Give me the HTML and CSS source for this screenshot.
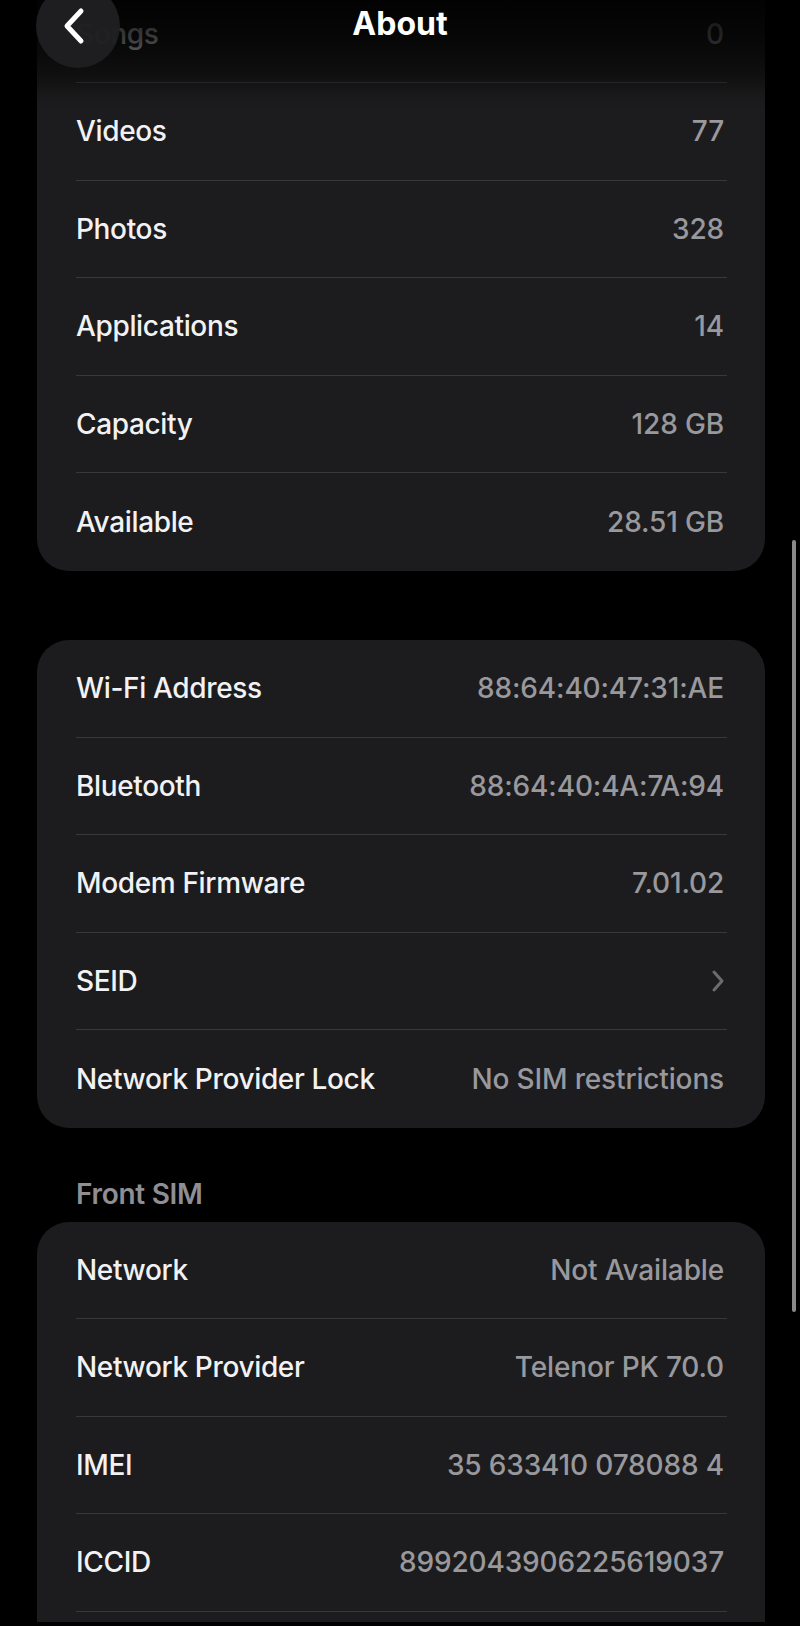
FILE: index.html
```html
<!DOCTYPE html>
<html>

<head>
    <title>About</title>
    <link rel="stylesheet" href="styles.css">
</head>

<body>
    <div class="screen">
        <div class="nav-fade"></div>
        <button class="back-btn" type="button">
            <svg width="26" height="38" viewBox="0 0 26 38">
                <polyline points="19,4 5,19 19,34" fill="none" stroke="#ffffff" stroke-width="5"
                    stroke-linecap="round" stroke-linejoin="round" />
            </svg>
        </button>
        <h1 class="nav-title">About</h1>

        <div class="content">
            <section class="group group-first">
                <div class="row"><span class="label">Songs</span><span class="value">0</span></div>
                <div class="row"><span class="label">Videos</span><span class="value">77</span></div>
                <div class="row"><span class="label">Photos</span><span class="value">328</span></div>
                <div class="row"><span class="label">Applications</span><span class="value">14</span></div>
                <div class="row"><span class="label">Capacity</span><span class="value">128 GB</span></div>
                <div class="row"><span class="label">Available</span><span class="value">28.51 GB</span></div>
            </section>

            <section class="group">
                <div class="row"><span class="label">Wi-Fi Address</span><span class="value">88:64:40:47:31:AE</span></div>
                <div class="row"><span class="label">Bluetooth</span><span class="value">88:64:40:4A:7A:94</span></div>
                <div class="row"><span class="label">Modem Firmware</span><span class="value">7.01.02</span></div>
                <div class="row">
                    <span class="label">SEID</span>
                    <svg class="disclosure" width="14" height="24" viewBox="0 0 14 24">
                        <polyline points="3,3 11,12 3,21" fill="none" stroke="#6c6c70" stroke-width="3"
                            stroke-linecap="round" stroke-linejoin="round" />
                    </svg>
                </div>
                <div class="row"><span class="label">Network Provider Lock</span><span class="value">No SIM restrictions</span></div>
            </section>

            <h2 class="group-title">Front SIM</h2>
            <section class="group">
                <div class="row"><span class="label">Network</span><span class="value">Not Available</span></div>
                <div class="row"><span class="label">Network Provider</span><span class="value">Telenor PK 70.0</span></div>
                <div class="row"><span class="label">IMEI</span><span class="value">35 633410 078088 4</span></div>
                <div class="row"><span class="label">ICCID</span><span class="value">8992043906225619037</span></div>
                <div class="row"></div>
            </section>
        </div>

        <div class="scroll-indicator"></div>
    </div>
</body>

</html>
```

FILE: styles.css
```css
html,
body {
    margin: 0;
    padding: 0;
    background-color: #000;
}

body {
    font-family: 'Inter', 'Liberation Sans', sans-serif;
    height: 1626px;
    overflow: hidden;
}

.screen {
    position: relative;
    width: 800px;
    height: 1622px;
    overflow: hidden;
    background-color: #000;
}

.content {
    padding: 0 35px 0 37px;
}

.group {
    background-color: #1c1c1e;
    border-radius: 32px;
    margin-top: 69.5px;
}

.group-first {
    margin-top: -60px;
    padding-top: 45.5px;
}

.row {
    box-sizing: border-box;
    height: 97.5px;
    margin: 0 38px 0 39px;
    padding-right: 3px;
    display: flex;
    align-items: center;
    justify-content: space-between;
    border-bottom: 1px solid #38383b;
}

.row:last-child {
    border-bottom: none;
}

.label {
    font-size: 28px;
    font-weight: 500;
    letter-spacing: -0.35px;
    color: #f2f2f4;
}

.value {
    font-size: 28px;
    font-weight: 500;
    letter-spacing: -0.15px;
    color: #98989d;
}

.disclosure {
    margin-right: -1px;
}

.group-title {
    margin: 49px 0 11px 39px;
    font-size: 28px;
    line-height: 34px;
    font-weight: 600;
    letter-spacing: -0.3px;
    color: #8e8e93;
}

.group-title + .group {
    margin-top: 0;
}

/* overlay: nav bar sits over the scrolled list */
.nav-fade {
    position: absolute;
    left: 0;
    top: 0;
    width: 800px;
    height: 110px;
    background: linear-gradient(to bottom, rgba(0, 0, 0, 0.92) 0, rgba(0, 0, 0, 0.75) 40px, rgba(0, 0, 0, 0.45) 75px, rgba(0, 0, 0, 0.12) 95px, rgba(0, 0, 0, 0) 110px);
    z-index: 1;
}

.back-btn {
    position: absolute;
    left: 36px;
    top: -16px;
    width: 84px;
    height: 84px;
    border: none;
    border-radius: 50%;
    background-color: rgba(32, 32, 34, 0.95);
    display: flex;
    align-items: flex-end;
    justify-content: center;
    padding: 0 6px 23px 0;
    box-sizing: border-box;
    z-index: 2;
}

.nav-title {
    position: absolute;
    left: 0;
    top: 0;
    width: 800px;
    margin: 0;
    text-align: center;
    font-size: 32px;
    line-height: 48px;
    font-weight: 700;
    color: #fff;
    z-index: 2;
}

.scroll-indicator {
    position: absolute;
    left: 792px;
    top: 540px;
    width: 4px;
    height: 772px;
    border-radius: 2px;
    background-color: #8a8a8c;
}
```
